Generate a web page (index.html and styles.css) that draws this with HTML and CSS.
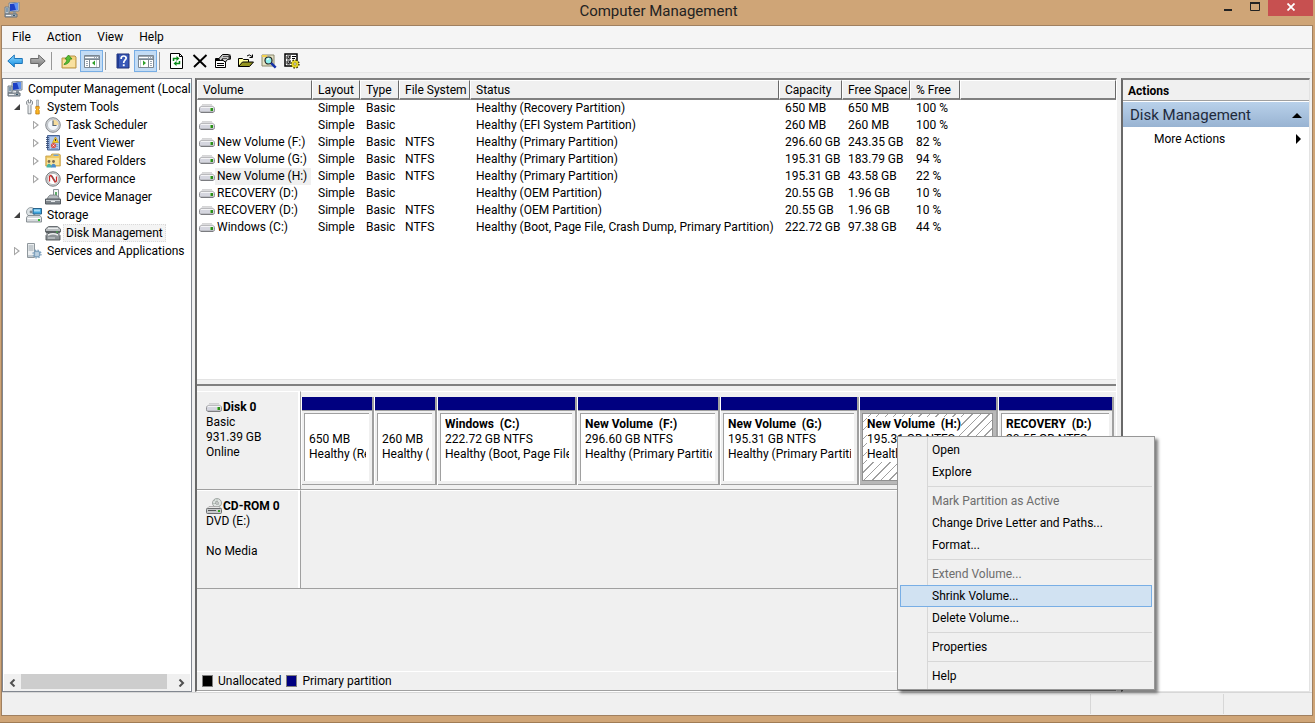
FILE: index.html
```html
<!DOCTYPE html>
<html lang="en">
<head>
  <meta charset="UTF-8">
  <meta name="viewport" content="width=device-width, initial-scale=1.0">
  <title>Computer Management</title>
  <link rel="stylesheet" href="styles.css">
</head>
<body>
  <!-- shared icons -->
  <svg class="sprite" aria-hidden="true">
    <symbol id="i-computer" viewBox="0 0 16 16">
      <path d="M5 1l10-1v9l-10 1z" fill="#d8dde2" stroke="#7d8790"/>
      <path d="M6 2l8-1v7l-8 1z" fill="#1c3fc4"/>
      <path d="M10 1.500l4-.5v7l-2 .3z" fill="#5f90f0"/>
      <path d="M1 5h4v7H1z" fill="#c3cad0" stroke="#74808a"/>
      <path d="M2 7h2M2 9h2" stroke="#3c6a8c"/>
      <path d="M9 10h3v2H9z" fill="#8d979f"/>
      <path d="M1 12h12v3H1z" fill="#aab2b9" stroke="#67717a"/>
      <path d="M2 13.500h5" stroke="#eef1f3"/>
      <path d="M9 13h2v1H9z" fill="#36596e"/>
    </symbol>
    <symbol id="i-tools" viewBox="0 0 16 16">
      <path d="M2.500 .8v3h2v-3l2 1.700v2.500L5 6.500v8.300H2V6.500L.6 5V2.500z" fill="#e8eaec" stroke="#7d8388" stroke-width=".9"/>
      <path d="M10.500 1h2v6h-2z" fill="#cfd4d8" stroke="#8a9096" stroke-width=".6"/>
      <path d="M9.800 7.500h3.400v2l-.7 1 .7 1v3.500H9.800v-3.500l.7-1-.7-1z" fill="#fbb623" stroke="#c47b08" stroke-width=".8"/>
    </symbol>
    <symbol id="i-clock" viewBox="0 0 16 16">
      <circle cx="8" cy="8" r="7.300" fill="#d2d5d9" stroke="#85898e" stroke-width="1"/>
      <circle cx="8" cy="8" r="5.500" fill="#f3f7fb" stroke="#a5a9ae" stroke-width=".6"/>
      <path d="M8 8V2.500A5.500 5.500 0 0 1 13.500 8z" fill="#f6dc9c"/>
      <path d="M8 3.500V8.500H11.500" fill="none" stroke="#5b6976" stroke-width="1.200"/>
    </symbol>
    <symbol id="i-event" viewBox="0 0 16 16">
      <path d="M2.500 .5h12v14.500h-12z" fill="#8fabd8" stroke="#4a6696"/>
      <path d="M5 2h9v12H5z" fill="#b4cbec"/>
      <path d="M6 9.500h7M6 11.500h7M6 13.500h7" stroke="#7394c8" stroke-width=".7"/>
      <path d="M1 2.500h3M1 4.500h3M1 6.500h3M1 8.500h3M1 10.500h3M1 12.500h3" stroke="#3a4f78" stroke-width=".9"/>
      <path d="M10.500 2l3 5.500h-6z" fill="#ffd21c" stroke="#b98c0c" stroke-width=".6"/>
      <path d="M10.500 4v2" stroke="#333"/>
      <circle cx="8.500" cy="10.500" r="2.600" fill="#d9534c"/>
      <path d="M7.500 9.500l2 2M9.500 9.500l-2 2" stroke="#fff" stroke-width=".7"/>
    </symbol>
    <symbol id="i-shared" viewBox="0 0 16 16">
      <path d="M.8 3h5l1-2h7.500l1 1v11H.8z" fill="#efca66" stroke="#c39b3f" stroke-width=".8"/>
      <path d="M2 5h12v7H2z" fill="#fae49b"/>
      <path d="M8.500 1.500h5V3h-5z" fill="#71a6dd"/>
      <circle cx="4" cy="8.500" r="1.400" fill="#7c6a4e"/>
      <circle cx="8.500" cy="8.500" r="1.400" fill="#7c6a4e"/>
      <path d="M1.500 14.500c0-5 5-5 5 0z" fill="#49b5a4"/>
      <path d="M6 14.500c0-5 5-5 5 0z" fill="#4c8ccb"/>
    </symbol>
    <symbol id="i-perf" viewBox="0 0 16 16">
      <circle cx="8" cy="8" r="7.200" fill="#d8dadc" stroke="#74787c"/>
      <circle cx="8" cy="8" r="5.600" fill="#fff" stroke="#999" stroke-width=".6"/>
      <path d="M4.500 10.500V6q0-1.500 1.500-1.500L10 11q1.500 0 1.500-1.500V5.500" fill="none" stroke="#cf2b2b" stroke-width="1.300"/>
      <path d="M7 4.500l3.500 6" stroke="#444" stroke-width=".8"/>
    </symbol>
    <symbol id="i-device" viewBox="0 0 16 16">
      <path d="M8.500 .5h5v8h-5z" fill="#f4f5f6" stroke="#8b9298"/>
      <path d="M10 3h2v4h-2z" fill="#5eae68"/>
      <path d="M3 8l2-2h6l3 2v3H2z" fill="#b5babe" stroke="#70777d" stroke-width=".7"/>
      <path d="M.5 10h15v5H.5z" fill="#7f868c" stroke="#555b61"/>
      <path d="M1 11.500h14" stroke="#c9ced2"/>
      <path d="M6 12h4v1H6z" fill="#e6e9eb"/>
    </symbol>
    <symbol id="i-storage" viewBox="0 0 16 16">
      <circle cx="5" cy="5" r="4.500" fill="#dde3e6" stroke="#8a9297" stroke-width=".8"/>
      <circle cx="5" cy="5" r="1.400" fill="#7c868c"/>
      <path d="M7 1.500h8.500v5.500H7z" fill="#3ea5de" stroke="#29638b"/>
      <path d="M8 2.500h6v2H8z" fill="#a7dcf7"/>
      <path d="M2 8.500h12l1.500 2V15H.5v-4.500z" fill="#d5d9dc" stroke="#7e868b" stroke-width=".9"/>
      <path d="M1.500 11.500h13" stroke="#fff"/>
      <path d="M12 12h2v2h-2z" fill="#34b834"/>
    </symbol>
    <symbol id="i-diskmgmt" viewBox="0 0 16 16">
      <path d="M3.500 1.500h9L15.500 4v3H.5V4z" fill="#b9bdc0" stroke="#5c6266" stroke-width=".9"/>
      <path d="M3 3.500h10" stroke="#eceeef"/>
      <path d="M1 6h14v2.500H1z" fill="#5b6164"/>
      <path d="M3 8.500h10l2 2V15H1v-4.500z" fill="#8d9397" stroke="#4d5256" stroke-width=".9"/>
      <path d="M3 10c3-1.500 7-1.500 10 0" fill="none" stroke="#f1f2f3" stroke-width="1.400"/>
      <path d="M3 13h7" stroke="#d5d9db"/>
      <path d="M11 6.500h2v1h-2z" fill="#3fc13f"/>
    </symbol>
    <symbol id="i-services" viewBox="0 0 16 16">
      <path d="M1.500 .5h7v14h-7z" fill="#eceff1" stroke="#8f979c"/>
      <path d="M2.500 3h5M2.500 5h5M2.500 7h5" stroke="#9ca6ad"/>
      <path d="M2 12h5v2H2z" fill="#c0c8ce"/>
      <circle cx="11" cy="11" r="2.800" fill="#cfe0ee" stroke="#7b9fbc" stroke-width="1.200"/>
      <circle cx="11" cy="11" r="4" fill="none" stroke="#7b9fbc" stroke-width="1.200" stroke-dasharray="1.600 1.540"/>
      <circle cx="11" cy="11" r="1.200" fill="#fff" stroke="#6d95b5" stroke-width=".6"/>
    </symbol>
    <symbol id="i-drive" viewBox="0 0 16 9">
      <path d="M2.500 1h11L15.500 4H.5z" fill="#e6e6e8"/>
      <path d="M3 .8h10" stroke="#bdbdc0" stroke-width=".9"/>
      <rect x=".5" y="3" width="15" height="5.300" rx="1.500" fill="#d5d6df" stroke="#8e8f93"/>
      <path d="M2 8.400h12" stroke="#77787c"/>
      <path d="M1.500 3.500h13" stroke="#f3f3f5"/>
      <path d="M11 4h1v3h-1z" fill="#7fc96f"/>
      <path d="M12 4h2v3h-2z" fill="#2c8d1b"/>
    </symbol>
    <symbol id="i-cdrom" viewBox="0 0 16 16">
      <circle cx="11" cy="5" r="4.500" fill="#dfe4e2" stroke="#8d9391" stroke-width=".8"/>
      <path d="M8 2l6 6M11 .5v4M7 5.500h4" stroke="#afbab3" stroke-width=".8"/>
      <circle cx="11" cy="5" r="1.300" fill="#fff" stroke="#717775" stroke-width=".7"/>
      <path d="M3 8.500h10l2.500 2.500H.5z" fill="#e6e6e6" stroke="#9a9a9a" stroke-width=".7"/>
      <rect x=".5" y="10.500" width="15" height="5" rx="1" fill="#c8cacc" stroke="#6c6e70"/>
      <path d="M2 12.500h8" stroke="#55585a"/>
      <path d="M12 12h2v2h-2z" fill="#35a51f"/>
    </symbol>
    <symbol id="i-pane-left" viewBox="0 0 16 14">
      <path d="M.5 1.500h15v12H.5z" fill="#fff" stroke="#7b8792"/>
      <path d="M1 2h14v3H1z" fill="#9ba7b3"/>
      <path d="M1 3.500h9" stroke="#fff"/>
      <path d="M11 3.500h1M13 3.500h1" stroke="#fff"/>
      <path d="M5.500 5v8M1 5.500h14" stroke="#7b8792"/>
      <path d="M2 7.500h2M2 9.500h2M2 11.500h2" stroke="#9ba7b3"/>
      <path d="M11 6.500v5L8 9z" fill="#2fa02a"/>
      <path d="M12.500 6v7" stroke="#c3ccd4"/>
    </symbol>
    <symbol id="i-pane-right" viewBox="0 0 16 14">
      <path d="M.5 1.500h15v12H.5z" fill="#fff" stroke="#7b8792"/>
      <path d="M1 2h14v3H1z" fill="#9ba7b3"/>
      <path d="M1 3.500h9" stroke="#fff"/>
      <path d="M11 3.500h1M13 3.500h1" stroke="#fff"/>
      <path d="M10.500 5v8M1 5.500h14" stroke="#7b8792"/>
      <path d="M12 7.500h2M12 9.500h2M12 11.500h2" stroke="#9ba7b3"/>
      <path d="M5 6.500v5L8 9z" fill="#2fa02a"/>
      <path d="M2.500 6v7" stroke="#c3ccd4"/>
    </symbol>
    <linearGradient id="g-blue" x2="0" y2="1"><stop offset="0" stop-color="#8fd8ff"/><stop offset="1" stop-color="#0f8be0"/></linearGradient>
    <linearGradient id="g-grey" x2="0" y2="1"><stop offset="0" stop-color="#c4c4c4"/><stop offset="1" stop-color="#777"/></linearGradient>
  </svg>

  <header class="titlebar">
    <svg class="icon" viewBox="0 0 16 16"><use href="#i-computer"/></svg>
    <h1>Computer Management</h1>
    <div class="window-buttons">
      <button class="minimize" aria-label="Minimize"><svg width="8" height="12"><path d="M0 8h8v2H0z" fill="#222"/></svg></button>
      <button class="maximize" aria-label="Maximize"><svg width="10" height="9"><path d="M.5 1h9v7.500h-9z" fill="none" stroke="#222"/><path d="M0 0h10v2H0z" fill="#222"/></svg></button>
      <button class="close" aria-label="Close"><svg width="8" height="8"><path d="M.5 .5l7 7M7.500 .5l-7 7" stroke="#fff" stroke-width="1.800"/></svg></button>
    </div>
  </header>

  <div class="window">
    <nav class="menubar">
      <button>File</button>
      <button>Action</button>
      <button>View</button>
      <button>Help</button>
    </nav>

    <div class="toolbar">
      <button aria-label="Back"><svg class="icon" viewBox="0 0 16 16"><path d="M.8 8l6.500-6v3.500h8v5h-8V14z" fill="url(#g-blue)" stroke="#1c74b8"/></svg></button>
      <button aria-label="Forward"><svg class="icon" viewBox="0 0 16 16"><path d="M15.200 8l-6.500-6v3.500h-8v5h8V14z" fill="url(#g-grey)" stroke="#686868"/></svg></button>
      <span class="divider"></span>
      <button aria-label="Up one level"><svg class="icon" viewBox="0 0 16 16"><path d="M1 5h5l1-2h7l1 1v11H1z" fill="#f3d27a" stroke="#b8934b"/><path d="M2 7h12v7H2z" fill="#f9e1a0"/><path d="M3 11c2-1 3-3 2.500-5H4l3.500-4L11 6H9c0 3-2.500 5.500-6 5.500z" fill="#55bd33" stroke="#2e861d" stroke-width=".7"/></svg></button>
      <button class="pressed" aria-label="Show console tree"><svg class="icon" viewBox="0 0 16 14"><use href="#i-pane-left"/></svg></button>
      <span class="divider"></span>
      <button aria-label="Help"><svg class="icon" viewBox="0 0 16 16"><path d="M2 1h12v14H2z" fill="#3858b8" stroke="#1e2f78"/><path d="M2 1h2v14H2z" fill="#1f3a90"/><path d="M6.200 6V4.800Q6.500 3 8.700 3T11.200 5Q11.200 6.300 9.800 7.300 8.700 8.200 8.700 10" fill="none" stroke="#fff" stroke-width="1.700"/><path d="M7.800 11.300h1.900v1.900H7.800z" fill="#fff"/></svg></button>
      <button class="pressed" aria-label="Show action pane"><svg class="icon" viewBox="0 0 16 14"><use href="#i-pane-right"/></svg></button>
      <span class="divider"></span>
      <button aria-label="Refresh"><svg class="icon" viewBox="0 0 16 16"><path d="M1.500 .5h9l3 3v12h-12z" fill="#fff" stroke="#000"/><path d="M10.500 .5v3h3" fill="none" stroke="#000"/><path d="M4.500 8V5.500H8M10.500 8v2.500H7" fill="none" stroke="#0a8a1a" stroke-width="1.500"/><path d="M7.500 3l3 2.500-3 2.500zM7.500 8v5l-3-2.500z" fill="#0a8a1a"/></svg></button>
      <button aria-label="Delete"><svg class="icon" viewBox="0 0 16 16"><path d="M1.500 2L14 14M14.500 2L2 14" stroke="#000" stroke-width="1.900"/></svg></button>
      <button aria-label="Properties"><svg class="icon" viewBox="0 0 16 16"><path d="M.5 5.500h10v9H.5z" fill="#fff" stroke="#000"/><path d="M1 6h9v2H1z"/><path d="M2 10.500h7M2 12.500h7" stroke="#000"/><path d="M3.500 6l4-4.500h6l2 1.500v3l-3 .5-2 2.500-2-1-1-1.500-2 1z" fill="#c9c9c9" stroke="#000"/><path d="M8 3.500h6M7 5.500h5" stroke="#555"/><path d="M13.500 1.500h2v5h-2z" fill="#333"/></svg></button>
      <button aria-label="Open"><svg class="icon" viewBox="0 0 16 16"><path d="M.5 13.500v-8h4l1 1h5v3" fill="#ffff9c" stroke="#000"/><path d="M.5 13.500l4-4.500h11l-4 4.500z" fill="#95951f" stroke="#000"/><path d="M9 3q2-2.500 5 .5M14.500 1.500v3h-3" fill="none" stroke="#000"/></svg></button>
      <button aria-label="Rescan"><svg class="icon" viewBox="0 0 16 16"><path d="M1 2h12v11H1z" fill="#e4e2c4" stroke="#88866c"/><path d="M1 2h5v2H1z" fill="#efcf50"/><circle cx="7.500" cy="7.500" r="3.500" fill="#8ff1ee" stroke="#222" stroke-width="1.200"/><path d="M6 6.500l2-1" stroke="#fff" stroke-width="1.300"/><path d="M10.200 10.200l4.500 4.500" stroke="#1431a8" stroke-width="2.500"/></svg></button>
      <button aria-label="Settings"><svg class="icon" viewBox="0 0 16 16"><path d="M1 1h12v12H1z" fill="#fff" stroke="#000" stroke-width="1.500"/><path d="M3 3h3v3H3zM3 8h3v3H3z" fill="#fff" stroke="#222"/><path d="M3.500 4.500l1 1 2-3M3.500 9.500l1 1 2-3" fill="none" stroke="#000"/><path d="M8 3.500h4M8 5.500h3" stroke="#000"/><circle cx="11" cy="11" r="3.800" fill="#e6d627" stroke="#46410a" stroke-width="1.800" stroke-dasharray="1.500 1.480"/><circle cx="11" cy="11" r="3.200" fill="#e6d627"/><circle cx="11" cy="11" r="1.200" fill="#fff" stroke="#46410a" stroke-width=".5"/></svg></button>
    </div>

    <main class="panes">
      <aside class="tree-pane">
        <ul class="tree">
          <li class="level-0"><svg class="icon" viewBox="0 0 16 16"><use href="#i-computer"/></svg><span>Computer Management (Local</span></li>
          <li class="level-1"><button class="twisty open" aria-label="Collapse"></button><svg class="icon" viewBox="0 0 16 16"><use href="#i-tools"/></svg><span>System Tools</span></li>
          <li class="level-2"><button class="twisty" aria-label="Expand"></button><svg class="icon" viewBox="0 0 16 16"><use href="#i-clock"/></svg><span>Task Scheduler</span></li>
          <li class="level-2"><button class="twisty" aria-label="Expand"></button><svg class="icon" viewBox="0 0 16 16"><use href="#i-event"/></svg><span>Event Viewer</span></li>
          <li class="level-2"><button class="twisty" aria-label="Expand"></button><svg class="icon" viewBox="0 0 16 16"><use href="#i-shared"/></svg><span>Shared Folders</span></li>
          <li class="level-2"><button class="twisty" aria-label="Expand"></button><svg class="icon" viewBox="0 0 16 16"><use href="#i-perf"/></svg><span>Performance</span></li>
          <li class="level-2 leaf"><svg class="icon" viewBox="0 0 16 16"><use href="#i-device"/></svg><span>Device Manager</span></li>
          <li class="level-1"><button class="twisty open" aria-label="Collapse"></button><svg class="icon" viewBox="0 0 16 16"><use href="#i-storage"/></svg><span>Storage</span></li>
          <li class="level-2 leaf selected"><svg class="icon" viewBox="0 0 16 16"><use href="#i-diskmgmt"/></svg><span>Disk Management</span></li>
          <li class="level-1"><button class="twisty" aria-label="Expand"></button><svg class="icon" viewBox="0 0 16 16"><use href="#i-services"/></svg><span>Services and Applications</span></li>
        </ul>
        <div class="scrollbar">
          <button aria-label="Scroll left"><svg width="7" height="8"><path d="M5.500 .5L2 4l3.500 3.500" fill="none" stroke="#505050" stroke-width="2"/></svg></button>
          <div class="track"><div class="thumb"></div></div>
          <button aria-label="Scroll right"><svg width="7" height="8"><path d="M1.500 .5L5 4 1.500 7.500" fill="none" stroke="#505050" stroke-width="2"/></svg></button>
        </div>
      </aside>

      <section class="disk-pane">
        <div class="volume-list">
          <table>
            <colgroup>
              <col class="c-volume"><col class="c-layout"><col class="c-type"><col class="c-fs"><col class="c-status"><col class="c-capacity"><col class="c-space"><col class="c-free"><col>
            </colgroup>
            <thead>
              <tr><th>Volume</th><th>Layout</th><th>Type</th><th>File System</th><th>Status</th><th>Capacity</th><th>Free Space</th><th>% Free</th><th></th></tr>
            </thead>
            <tbody>
              <tr><td><svg class="drive" viewBox="0 0 16 9"><use href="#i-drive"/></svg></td><td>Simple</td><td>Basic</td><td></td><td>Healthy (Recovery Partition)</td><td>650 MB</td><td>650 MB</td><td>100 %</td><td></td></tr>
              <tr><td><svg class="drive" viewBox="0 0 16 9"><use href="#i-drive"/></svg></td><td>Simple</td><td>Basic</td><td></td><td>Healthy (EFI System Partition)</td><td>260 MB</td><td>260 MB</td><td>100 %</td><td></td></tr>
              <tr><td><svg class="drive" viewBox="0 0 16 9"><use href="#i-drive"/></svg><span>New Volume (F:)</span></td><td>Simple</td><td>Basic</td><td>NTFS</td><td>Healthy (Primary Partition)</td><td>296.60 GB</td><td>243.35 GB</td><td>82 %</td><td></td></tr>
              <tr><td><svg class="drive" viewBox="0 0 16 9"><use href="#i-drive"/></svg><span>New Volume (G:)</span></td><td>Simple</td><td>Basic</td><td>NTFS</td><td>Healthy (Primary Partition)</td><td>195.31 GB</td><td>183.79 GB</td><td>94 %</td><td></td></tr>
              <tr class="selected"><td><svg class="drive" viewBox="0 0 16 9"><use href="#i-drive"/></svg><span>New Volume (H:)</span></td><td>Simple</td><td>Basic</td><td>NTFS</td><td>Healthy (Primary Partition)</td><td>195.31 GB</td><td>43.58 GB</td><td>22 %</td><td></td></tr>
              <tr><td><svg class="drive" viewBox="0 0 16 9"><use href="#i-drive"/></svg><span>RECOVERY (D:)</span></td><td>Simple</td><td>Basic</td><td></td><td>Healthy (OEM Partition)</td><td>20.55 GB</td><td>1.96 GB</td><td>10 %</td><td></td></tr>
              <tr><td><svg class="drive" viewBox="0 0 16 9"><use href="#i-drive"/></svg><span>RECOVERY (D:)</span></td><td>Simple</td><td>Basic</td><td>NTFS</td><td>Healthy (OEM Partition)</td><td>20.55 GB</td><td>1.96 GB</td><td>10 %</td><td></td></tr>
              <tr><td><svg class="drive" viewBox="0 0 16 9"><use href="#i-drive"/></svg><span>Windows (C:)</span></td><td>Simple</td><td>Basic</td><td>NTFS</td><td>Healthy (Boot, Page File, Crash Dump, Primary Partition)</td><td>222.72 GB</td><td>97.38 GB</td><td>44 %</td><td></td></tr>
            </tbody>
          </table>
        </div>

        <div class="splitter"></div>

        <div class="disks">
          <div class="disk">
            <div class="disk-label">
              <h2><svg class="drive" viewBox="0 0 16 9"><use href="#i-drive"/></svg>Disk 0</h2>
              <p>Basic</p>
              <p>931.39 GB</p>
              <p>Online</p>
            </div>
            <div class="partitions">
              <div class="partition" style="flex-grow: 70"><div class="bar"></div><div class="frame"><div class="info"><b></b><p>650 MB</p><p>Healthy (Recovery Partition)</p></div></div></div>
              <div class="partition" style="flex-grow: 60"><div class="bar"></div><div class="frame"><div class="info"><b></b><p>260 MB</p><p>Healthy (EFI System Partition)</p></div></div></div>
              <div class="partition" style="flex-grow: 137"><div class="bar"></div><div class="frame"><div class="info"><b>Windows&nbsp; (C:)</b><p>222.72 GB NTFS</p><p>Healthy (Boot, Page File, Crash Dump, Primary Partition)</p></div></div></div>
              <div class="partition" style="flex-grow: 140"><div class="bar"></div><div class="frame"><div class="info"><b>New Volume&nbsp; (F:)</b><p>296.60 GB NTFS</p><p>Healthy (Primary Partition)</p></div></div></div>
              <div class="partition" style="flex-grow: 136"><div class="bar"></div><div class="frame"><div class="info"><b>New Volume&nbsp; (G:)</b><p>195.31 GB NTFS</p><p>Healthy (Primary Partition)</p></div></div></div>
              <div class="partition active" style="flex-grow: 136"><div class="bar"></div><div class="frame"><div class="info"><b>New Volume&nbsp; (H:)</b><p>195.31 GB NTFS</p><p>Healthy (Primary Partition)</p></div></div></div>
              <div class="partition" style="flex-grow: 113"><div class="bar"></div><div class="frame"><div class="info"><b>RECOVERY&nbsp; (D:)</b><p>20.55 GB NTFS</p><p>Healthy (OEM Partition)</p></div></div></div>
            </div>
          </div>
          <div class="disk">
            <div class="disk-label">
              <h2><svg class="icon" viewBox="0 0 16 16"><use href="#i-cdrom"/></svg>CD-ROM 0</h2>
              <p>DVD (E:)</p>
              <p></p>
              <p>No Media</p>
            </div>
            <div class="partitions"></div>
          </div>
        </div>

        <div class="legend">
          <span class="swatch unallocated"></span><span>Unallocated</span>
          <span class="swatch primary"></span><span>Primary partition</span>
        </div>
      </section>

      <aside class="actions-pane">
        <h2>Actions</h2>
        <button class="group">Disk Management<svg width="10" height="5"><path d="M0 5l5-5 5 5z"/></svg></button>
        <button class="more">More Actions<svg width="5" height="10"><path d="M0 0l5 5-5 5z"/></svg></button>
      </aside>
    </main>

    <footer class="statusbar"><span></span><span></span><span></span></footer>
  </div>

  <div class="context-menu" role="menu">
    <button role="menuitem">Open</button>
    <button role="menuitem">Explore</button>
    <hr>
    <button role="menuitem" disabled>Mark Partition as Active</button>
    <button role="menuitem">Change Drive Letter and Paths...</button>
    <button role="menuitem">Format...</button>
    <hr>
    <button role="menuitem" disabled>Extend Volume...</button>
    <button role="menuitem" class="hover">Shrink Volume...</button>
    <button role="menuitem">Delete Volume...</button>
    <hr>
    <button role="menuitem">Properties</button>
    <hr>
    <button role="menuitem">Help</button>
  </div>
</body>
</html>
```
FILE: styles.css
```css
* {
  box-sizing: border-box;
}

body {
  display: flex;
  flex-direction: column;
  height: 100vh;
  margin: 0;
  padding: 0 2px 6px 1px;
  overflow: hidden;
  position: relative;
  background-color: #cfa577;
  border-bottom: 1px solid #a07c54;
  color: #000;
  font-family: Roboto, "Open Sans", sans-serif;
  font-size: 12px;
  line-height: 15px;
  white-space: nowrap;
}

h1, h2, p, ul {
  margin: 0;
  padding: 0;
  list-style: none;
}

button {
  padding: 0;
  border: 0;
  background: none;
  color: inherit;
  font: inherit;
}

svg {
  display: block;
  flex-shrink: 0;
}

.sprite {
  position: absolute;
  width: 0;
  height: 0;
}

.icon {
  width: 16px;
  height: 16px;
}

.drive {
  width: 16px;
  height: 9px;
}

/* title bar */
.titlebar {
  display: grid;
  grid-template-columns: 1fr auto 1fr;
  height: 25px;
  padding-left: 3px;
}

.titlebar .icon {
  margin-top: 2px;
}

.titlebar h1 {
  color: #222;
  font-size: 15px;
  font-weight: normal;
  line-height: 22px;
}

.window-buttons {
  display: flex;
  justify-content: flex-end;
  align-items: flex-start;
}

.window-buttons button {
  display: flex;
  justify-content: center;
  align-items: center;
  width: 27px;
  height: 13px;
}

.window-buttons .close {
  width: 45px;
  height: 16px;
  padding-bottom: 2px;
  background-color: #c75050;
}

/* window */
.window {
  display: flex;
  flex: 1;
  flex-direction: column;
  min-height: 0;
  border: 1px solid #a08060;
  background-color: #f0f0f0;
}

.menubar {
  display: flex;
  height: 23px;
  padding-left: 2px;
  background-color: #f5f5f5;
  border-bottom: 1px solid #b4b4b4;
}

.menubar button {
  padding: 0 8px;
}

.toolbar {
  display: flex;
  align-items: center;
  height: 24px;
  padding-left: 1px;
  background-color: #f5f5f5;
  border-bottom: 1px solid #e6e6e6;
}

.toolbar button {
  display: flex;
  justify-content: center;
  align-items: center;
  width: 23px;
  height: 22px;
}

.toolbar .pressed {
  border: 1px solid #78aee5;
  background-color: #c3dcf5;
}

.toolbar .divider {
  width: 1px;
  height: 18px;
  margin: 0 5px 0 2px;
  background-color: #979797;
}

.panes {
  display: flex;
  flex: 1;
  gap: 3px;
  min-height: 0;
  padding: 5px 2px 0 0;
}

/* console tree */
.tree-pane {
  display: flex;
  flex: 0 0 190px;
  flex-direction: column;
  overflow: hidden;
  background-color: #fff;
  border: 1px solid #828790;
}

.tree {
  flex: 1;
  padding-top: 1px;
  overflow: hidden;
}

.tree li {
  display: flex;
  align-items: center;
  height: 18px;
}

.tree .icon {
  margin-right: 2px;
}

.tree span {
  padding: 0 3px;
  line-height: 18px;
}

.level-0 {
  padding-left: 4px;
}

.level-1 {
  padding-left: 8px;
}

.level-2 {
  padding-left: 27px;
}

.leaf {
  padding-left: 42px;
}

.tree .selected span {
  background-color: #f4f4f4;
  outline: 1px dotted #dadada;
  outline-offset: -1px;
}

.twisty {
  display: flex;
  align-items: center;
  width: 15px;
  height: 18px;
}

.twisty::before {
  content: "";
  width: 6px;
  height: 9px;
  margin-left: 3px;
  background-color: #a6a6a6;
  clip-path: polygon(0 0, 100% 50%, 0 100%, 0 0, 1px 2px, 1px 7px, 4px 50%, 1px 2px);
}

.twisty.open::before {
  height: 6px;
  background-color: #404040;
  clip-path: polygon(100% 0, 100% 100%, 0 100%);
}

.scrollbar {
  display: flex;
  height: 17px;
  margin: 0 1px;
  background-color: #f0f0f0;
}

.scrollbar button {
  display: flex;
  justify-content: center;
  align-items: center;
  width: 17px;
}

.track {
  flex: 1;
}

.thumb {
  width: 96%;
  height: 15px;
  background-color: #cdcdcd;
}

/* volume list and disk graph */
.disk-pane {
  display: flex;
  flex: 1;
  flex-direction: column;
  min-width: 0;
  border: 2px solid #696969;
  border-color: #808080 #fff #fff #696969;
  border-width: 2px 1px 1px 2px;
}

.volume-list {
  flex: 1;
  overflow: hidden;
  background-color: #fff;
}

table {
  width: 100%;
  table-layout: fixed;
  border-collapse: separate;
  border-spacing: 0;
}

.c-volume { width: 115px; }
.c-layout { width: 48px; }
.c-type { width: 39px; }
.c-fs { width: 71px; }
.c-status { width: 309px; }
.c-capacity { width: 63px; }
.c-space { width: 68px; }
.c-free { width: 50px; }

th {
  height: 19px;
  padding: 1px 0 0 5px;
  overflow: hidden;
  background-color: #f0f0f0;
  border: 1px solid #fff;
  border-right-color: #696969;
  border-bottom: 2px solid #808080;
  font-weight: normal;
  line-height: 16px;
  text-align: left;
}

td {
  height: 17px;
  padding: 0 0 0 6px;
  line-height: 17px;
}

td:first-child {
  display: flex;
  align-items: center;
  padding-left: 2px;
}

td span {
  padding: 0 4px 0 2px;
}

tr.selected span {
  background-color: #f0f0f0;
}

.splitter {
  height: 7px;
  background-color: #f0f0f0;
  border-top: 1px solid #e3e3e3;
  border-bottom: 2px solid #808080;
}

.disks {
  height: 285px;
  padding-top: 5px;
}

.disk {
  display: flex;
  height: 99px;
}

.disk-label {
  width: 104px;
  padding: 8px 0 0 9px;
  border: 1px solid #a0a0a0;
  border-top-color: #fff;
  border-left: 0;
  box-shadow: inset -2px 0 #fff;
}

.disk-label h2 {
  display: flex;
  align-items: center;
  gap: 1px;
  height: 15px;
  font-size: 12px;
}

.disk-label .icon {
  align-self: flex-end;
}

.disk-label p {
  height: 15px;
}

.partitions {
  display: flex;
  flex: 1;
  min-width: 0;
  padding: 5px 2px 4px 0;
  border-top: 1px solid #fff;
  border-bottom: 1px solid #a0a0a0;
}

.partition {
  display: flex;
  flex: 1 1 0;
  flex-direction: column;
  min-width: 0;
  border-right: 2px solid #a0a0a0;
  border-left: 1px solid #fff;
}

.bar {
  height: 13px;
  background-color: #000080;
}

.frame {
  flex: 1;
  min-height: 0;
  padding: 2px 3px 3px 2px;
  border-top: 1px solid #a0a0a0;
  border-bottom: 1px solid #a0a0a0;
}

.info {
  height: 100%;
  padding: 3px 3px 0 4px;
  overflow: hidden;
  background-color: #fff;
  border-top: 1px solid #a0a0a0;
  border-left: 1px solid #a0a0a0;
}

.info b,
.info p {
  display: block;
  height: 15px;
  overflow: hidden;
}

.active .frame {
  background-color: #b8b8b8;
}

.active .info {
  background: repeating-linear-gradient(135deg, #fff 0 5px, #a0a0a0 5px 6px);
  border: 1px solid #909090;
}

.active .info b,
.active .info p {
  width: fit-content;
  max-width: 100%;
  background-color: #fff;
}

.legend {
  display: flex;
  align-items: center;
  gap: 5px;
  height: 20px;
  padding-left: 5px;
  border-top: 1px solid #fff;
  border-bottom: 1px solid #a0a0a0;
}

.swatch {
  width: 11px;
  height: 12px;
  border: 1px solid #808080;
}

.unallocated {
  background-color: #000;
}

.primary {
  background-color: #000080;
}

/* actions */
.actions-pane {
  display: flex;
  flex: 0 0 189px;
  flex-direction: column;
  margin-left: 1px;
  background-color: #fff;
  border: 2px solid #696969;
  border-color: #808080 #e3e3e3 #e3e3e3 #696969;
  border-width: 2px 1px 1px 2px;
}

.actions-pane h2 {
  height: 21px;
  padding-left: 5px;
  background-color: #f0f0f0;
  border-bottom: 1px solid #a0a0a0;
  font-size: 12px;
  line-height: 22px;
}

.actions-pane button {
  display: flex;
  justify-content: space-between;
  align-items: center;
}

.actions-pane .group {
  height: 25px;
  margin-top: 1px;
  padding: 2px 7px 0;
  background: linear-gradient(#b9d1ea, #98b3d2);
  color: #1e2a3c;
  font-size: 15px;
}

.actions-pane .more {
  height: 24px;
  padding: 0 8px 0 31px;
}

.statusbar {
  display: flex;
  height: 23px;
  border-top: 1px solid #d7d7d7;
}

.statusbar span {
  width: 133px;
  margin: 1px 0;
  border-right: 1px solid #d7d7d7;
}

.statusbar span:first-child {
  flex: 1;
}

.statusbar span:last-child {
  width: 88px;
  border-right: 0;
}

/* context menu over the disk graph */
.context-menu {
  position: absolute;
  top: 436px;
  left: 897px;
  width: 258px;
  padding: 2px;
  background: linear-gradient(90deg, transparent 29px, #d7d7d7 29px 30px, transparent 30px) #f0f0f0;
  border: 1px solid #979797;
  box-shadow: 3px 3px 3px rgba(0, 0, 0, 0.5);
}

.context-menu button {
  display: block;
  width: 100%;
  height: 22px;
  padding-left: 32px;
  text-align: left;
}

.context-menu button:disabled {
  color: #6d6d6d;
}

.context-menu .hover {
  padding-left: 31px;
  background-color: #d1e2f2;
  border: 1px solid #78aee5;
}

.context-menu hr {
  height: 1px;
  margin: 3px 0 3px 28px;
  background-color: #d7d7d7;
  border: 0;
}
```
